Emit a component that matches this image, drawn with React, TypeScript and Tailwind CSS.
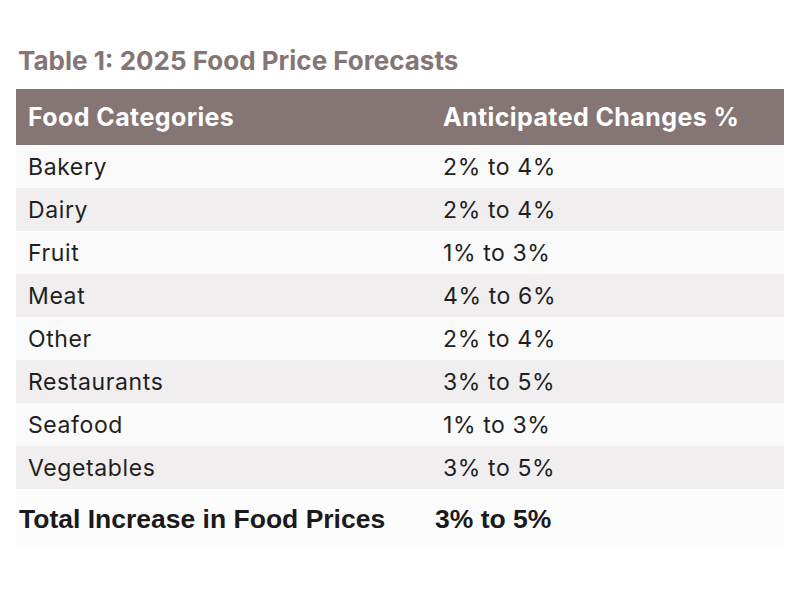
import React from "react";

const rows: [string, string][] = [
  ["Bakery", "2% to 4%"],
  ["Dairy", "2% to 4%"],
  ["Fruit", "1% to 3%"],
  ["Meat", "4% to 6%"],
  ["Other", "2% to 4%"],
  ["Restaurants", "3% to 5%"],
  ["Seafood", "1% to 3%"],
  ["Vegetables", "3% to 5%"],
];

export default function App() {
  return (
    <div className="w-[800px] h-[600px] bg-white pt-[46px] px-4 font-['Inter',sans-serif]">
      <h1 className="text-[26px] leading-[30px] font-bold text-[#857574] pl-[2px] mb-[13px]">
        Table 1: 2025 Food Price Forecasts
      </h1>
      <div className="w-[768px]">
        <div className="flex items-center h-[56px] bg-[#857574] text-white text-[25px] tracking-[0.4px] font-bold pt-[2px]">
          <div className="w-[427px] pl-3">Food Categories</div>
          <div>Anticipated Changes %</div>
        </div>
        {rows.map(([a, b], i) => (
          <div
            key={a}
            className={`flex items-center h-[43px] text-[23px] tracking-[0.6px] text-[#1f1f1f] pt-[2px] ${
              i % 2 === 0 ? "bg-[#fafafa]" : "bg-[#f0eeef]"
            }`}
          >
            <div className="w-[427px] pl-3">{a}</div>
            <div>{b}</div>
          </div>
        ))}
        <div className="flex items-center h-[59px] bg-[#fcfcfc] text-[26.5px] font-bold text-[#1a1a1a] font-['Liberation_Sans',sans-serif] pt-[3px]">
          <div className="w-[419px] pl-[3px]">Total Increase in Food Prices</div>
          <div>3% to 5%</div>
        </div>
      </div>
    </div>
  );
}
